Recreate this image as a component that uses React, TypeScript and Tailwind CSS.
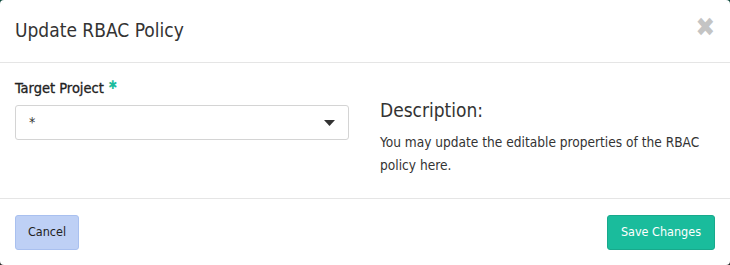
import React from "react";

export default function App() {
  const font = { fontFamily: '"DejaVu Sans Condensed", "DejaVu Sans", sans-serif' };
  return (
    <div className="w-[730px] h-[265px] bg-[linear-gradient(to_bottom,#0e4a3c,#2a2a2a)]" style={font}>
      <div className="w-full h-full bg-white rounded-[4px] flex flex-col text-[#333]">
        <div className="h-[63px] flex items-center justify-between pl-[15px] pr-[15px] border-b border-[#e5e5e5] shrink-0">
          <h4 className="text-[19px] leading-none mt-[-1px]">Update RBAC Policy</h4>
          <span className="text-[#c4c4c4] text-[26px] font-bold leading-none -mt-[9px]">✖</span>
        </div>
        <div className="h-[136px] flex px-[15px] pt-[15px] gap-[31px] border-b border-[#e5e5e5] shrink-0">
          <div className="w-[334px]">
            <label className="block text-[14.5px] leading-[20px] h-[20px] text-[#222] [-webkit-text-stroke:0.3px_#222]">
              Target Project <span className="text-[#1abc9c] text-[12px] relative -top-[4px] [-webkit-text-stroke:0]">✱</span>
            </label>
            <div className="mt-[7px] h-[35px] border border-[#d4d4d4] rounded-[3px] flex items-center justify-between pl-[13px] pr-[13px]">
              <span className="text-[14px]">*</span>
              <svg width="11" height="6" viewBox="0 0 11 6"><path d="M0 0h11L5.5 6z" fill="#333" /></svg>
            </div>
          </div>
          <div className="flex-1 pt-[22px]">
            <h3 className="text-[19px] leading-[20px]">Description:</h3>
            <p className="mt-[11px] text-[13.6px] leading-[23px]">
              You may update the editable properties of the RBAC policy here.
            </p>
          </div>
        </div>
        <div className="flex-1 flex items-center justify-between px-[15px]">
          <button className="h-[35px] w-[64px] bg-[#bed0f5] border border-[#a9c0ef] rounded-[3px] text-[12.5px] text-[#222]">Cancel</button>
          <button className="h-[35px] w-[108px] bg-[#1abc9c] border border-[#18a98c] rounded-[3px] text-[12.5px] text-white">Save Changes</button>
        </div>
      </div>
    </div>
  );
}
